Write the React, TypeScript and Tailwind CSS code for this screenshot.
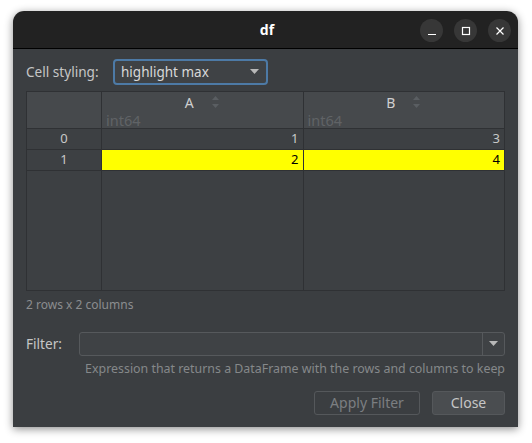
import { useState } from "react";

type Row = { idx: number; a: number; b: number; hl: boolean };

const rows: Row[] = [
  { idx: 0, a: 1, b: 3, hl: false },
  { idx: 1, a: 2, b: 4, hl: true },
];

function SortArrows() {
  return (
    <svg width="9" height="14" viewBox="0 0 9 14" className="ml-[17px]">
      <path d="M1 5 L4.5 1 L8 5 Z" fill="#5a5e62" />
      <path d="M1 9 L4.5 13 L8 9 Z" fill="#5a5e62" />
    </svg>
  );
}

function TitleButton({ kind }: { kind: "min" | "max" | "close" }) {
  return (
    <div className="w-[23px] h-[23px] rounded-full bg-[#373737] flex items-center justify-center">
      <svg width="12" height="12" viewBox="0 0 12 12">
        {kind === "min" && <path d="M2 9.5 H10" stroke="#fff" strokeWidth="1.2" />}
        {kind === "max" && <rect x="2.5" y="2.5" width="7" height="7" fill="none" stroke="#fff" strokeWidth="1.2" />}
        {kind === "close" && <path d="M2.5 2.5 L9.5 9.5 M9.5 2.5 L2.5 9.5" stroke="#fff" strokeWidth="1.2" />}
      </svg>
    </div>
  );
}

export default function App() {
  const [style] = useState("highlight max");

  return (
    <div
      className="w-[532px] h-[443px] bg-white pl-[13px] pt-[11px]"
      style={{ fontFamily: '"Noto Sans", "DejaVu Sans", sans-serif' }}
    >
      <div className="w-[505px] h-[416px] flex flex-col rounded-t-[11px] overflow-hidden shadow-[0_2px_8px_rgba(0,0,0,0.45)]">
        {/* title bar */}
        <div className="h-[38px] bg-[#222222] border-b border-black flex items-center relative">
          <div className="flex-1 text-center text-white font-bold text-[14px] pl-[3px]">df</div>
          <div className="absolute right-[7px] top-[8px] flex gap-[11px]">
            <TitleButton kind="min" />
            <TitleButton kind="max" />
            <TitleButton kind="close" />
          </div>
        </div>

        {/* body */}
        <div className="flex-1 bg-[#3b3e41] px-[13px] pt-[10px] flex flex-col text-[13px] text-[#c6c6c6]">
          <div className="flex items-center h-[26px]">
            <span className="w-[87px] text-[13.6px]">Cell styling:</span>
            <div className="w-[155px] h-[26px] border-2 border-[#4d7aa6] rounded-[4px] bg-[#3f4245] flex items-center pl-[6px] pr-[7px] justify-between">
              <span className="text-[#d8d8d8] text-[13.5px]">{style}</span>
              <svg width="9" height="6" viewBox="0 0 9 6">
                <path d="M0 0 H9 L4.5 5 Z" fill="#b8b8b8" />
              </svg>
            </div>
          </div>

          {/* table */}
          <div className="mt-[6px] h-[200px] border border-[#2f3134] bg-[#3d4043] flex">
            <div className="w-[75px] border-r border-[#2f3134] flex flex-col">
              <div className="h-[37px] bg-[#46494c] border-b border-[#2f3134]" />
              {rows.map((r) => (
                <div key={r.idx} className="h-[21px] border-b border-[#2f3134] flex items-center justify-center text-[#c8c8c8]">
                  {r.idx}
                </div>
              ))}
            </div>
            {(["A", "B"] as const).map((col, ci) => (
              <div key={col} className={`flex-1 flex flex-col ${ci === 0 ? "border-r border-[#2f3134]" : ""}`}>
                <div className="h-[37px] bg-[#46494c] border-b border-[#2f3134] flex flex-col">
                  <div className="h-[20px] flex items-center justify-center">
                    <span className="text-[#cfcfcf] text-[14px]">{col}</span>
                    <SortArrows />
                  </div>
                  <div className="pl-[4px] text-[#606366] text-[14.5px] leading-[16px]">int64</div>
                </div>
                {rows.map((r) => (
                  <div
                    key={r.idx}
                    className={`h-[21px] border-b border-[#2f3134] flex items-center justify-end pr-[4px] ${
                      r.hl ? "bg-[#ffff00] text-black" : "text-[#c8c8c8]"
                    }`}
                  >
                    {col === "A" ? r.a : r.b}
                  </div>
                ))}
              </div>
            ))}
          </div>

          <div className="mt-[5px] text-[12px] text-[#8b8d8f]">2 rows x 2 columns</div>

          {/* filter */}
          <div className="mt-[18px] flex items-center h-[24px]">
            <span className="w-[53px] text-[13.6px]">Filter:</span>
            <div className="flex-1 h-[24px] border border-[#56595c] rounded-[3px] bg-[#3f4245] flex justify-end">
              <div className="w-[22px] border-l border-[#56595c] flex items-center justify-center">
                <svg width="9" height="6" viewBox="0 0 9 6">
                  <path d="M0 0 H9 L4.5 5 Z" fill="#b8b8b8" />
                </svg>
              </div>
            </div>
          </div>
          <div className="mt-[4px] text-right text-[12.4px] text-[#85888a]">
            Expression that returns a DataFrame with the rows and columns to keep
          </div>

          {/* buttons */}
          <div className="mt-[12px] flex justify-end gap-[12px]">
            <button className="w-[106px] h-[24px] border border-[#55585b] rounded-[3px] text-[#7b7e81] text-[14px]">
              Apply Filter
            </button>
            <button className="w-[73px] h-[24px] border border-[#55585b] rounded-[3px] bg-[#4a4d50] text-[#c6c6c6] text-[14px]">
              Close
            </button>
          </div>
        </div>
      </div>
    </div>
  );
}
